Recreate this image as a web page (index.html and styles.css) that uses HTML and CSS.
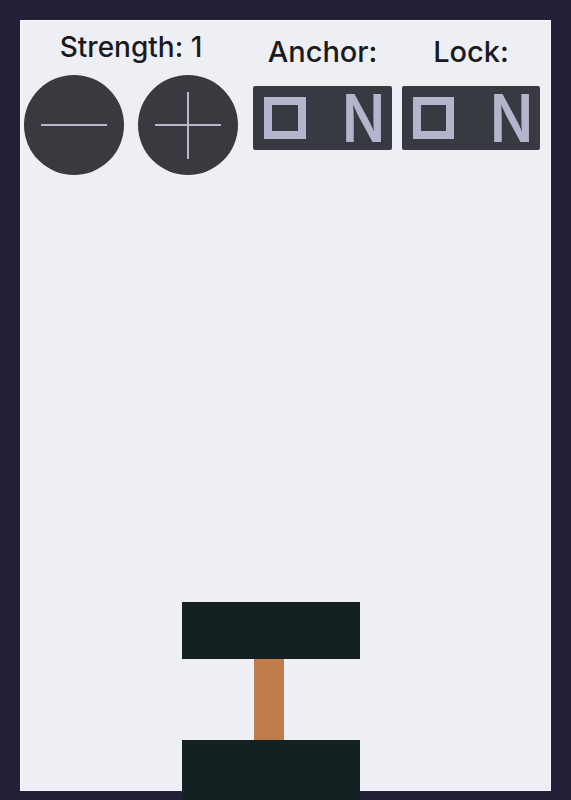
FILE: index.html
```html
<!DOCTYPE html>
<html>
<head>
<meta charset="utf-8">
<link rel="stylesheet" href="styles.css">
</head>
<body>
<div class="panel">
  <div class="controls">
    <div class="col strength">
      <div class="label small">Strength: 1</div>
      <div class="buttons">
        <div class="circle">
          <svg width="100" height="100" viewBox="0 0 100 100"><line x1="17" y1="50" x2="83" y2="50" /></svg>
        </div>
        <div class="circle">
          <svg width="100" height="100" viewBox="0 0 100 100"><line x1="17" y1="50" x2="83" y2="50" /><line x1="50" y1="17" x2="50" y2="84" /></svg>
        </div>
      </div>
    </div>
    <div class="col anchor">
      <div class="label">Anchor:</div>
      <div class="toggle"><span class="sq">O</span><span class="n">N</span></div>
    </div>
    <div class="col lock">
      <div class="label">Lock:</div>
      <div class="toggle"><span class="sq">O</span><span class="n">N</span></div>
    </div>
  </div>
  <div class="magnet">
    <div class="pole top"></div>
    <div class="rod"></div>
    <div class="pole bottom"></div>
  </div>
</div>
</body>
</html>
```
FILE: styles.css
```css
html {
  margin: 0;
  padding: 0;
  background: #221f38;
}
body {
  margin: 0;
  padding: 20px 0 0 20px;
  height: 780px;
  font-family: Inter, "Noto Sans", sans-serif;
  color: #1a1a20;
}
.panel {
  position: relative;
  width: 531px;
  height: 771px;
  background: #eeeef5;
  box-shadow: inset 0 0 0 1px #f8f8fc;
}
.controls {
  display: flex;
  padding: 0 0 0 4px;
}
.col {
  display: flex;
  flex-direction: column;
  align-items: center;
}
.strength {
  width: 214px;
}
.anchor {
  width: 139px;
  margin-left: 15px;
}
.lock {
  width: 138px;
  margin-left: 10px;
}
.label {
  font-size: 29px;
  font-weight: 500;
  line-height: 36px;
  height: 36px;
  margin-top: 14px;
  margin-bottom: 16px;
  white-space: nowrap;
}
.label.small {
  font-size: 28px;
  line-height: 32px;
  height: 32px;
  margin-top: 11px;
  margin-bottom: 12px;
}
.buttons {
  display: flex;
  gap: 14px;
}
.circle {
  width: 100px;
  height: 100px;
  border-radius: 50%;
  background: #383a40;
}
.circle svg {
  display: block;
}
.circle line {
  stroke: #b8b8cc;
  stroke-width: 2;
}
.toggle {
  position: relative;
  width: 100%;
  height: 64px;
  background: #373a41;
  border-radius: 2px;
  display: flex;
  align-items: flex-start;
}
.sq {
  box-sizing: border-box;
  width: 42px;
  height: 42px;
  margin: 11px 0 0 11px;
  border: 8px solid #b4b4cc;
  color: transparent;
  font-size: 10px;
  overflow: hidden;
}
.n {
  display: block;
  margin: 2px 0 0 36px;
  font-size: 66px;
  line-height: 60px;
  font-weight: 600;
  color: #b4b4cc;
  transform: scaleX(0.86);
  transform-origin: left top;
}
.magnet {
  position: absolute;
  left: 162px;
  top: 582px;
  width: 178px;
  display: flex;
  flex-direction: column;
  align-items: flex-start;
}
.pole {
  width: 178px;
  background: #142022;
}
.pole.top {
  height: 57px;
}
.pole.bottom {
  height: 60px;
}
.rod {
  width: 30px;
  height: 81px;
  margin-left: 72px;
  background: #c17c4c;
}
```
